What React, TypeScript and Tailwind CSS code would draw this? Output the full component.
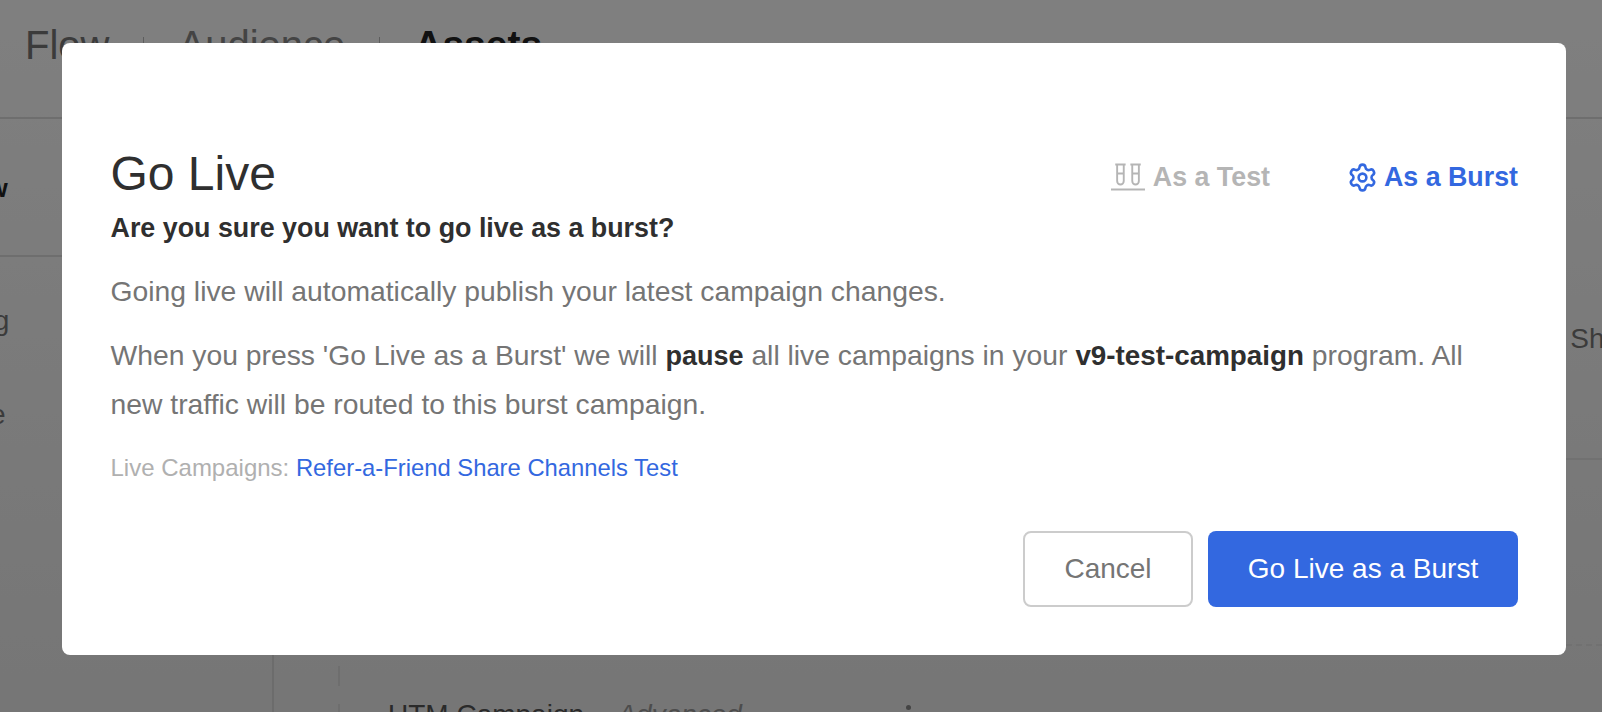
import { Settings } from "lucide-react";

function Tubes() {
  return (
    <svg width="34" height="28" viewBox="0 0 36 28" preserveAspectRatio="none" fill="none" stroke="#b5b5b5" strokeWidth="2">
      <path d="M4.5 1.5h11M6.5 1.5v16.5a3.5 3.5 0 0 0 7 0V1.5M6.5 10.5h7" />
      <path d="M20.5 1.5h11M22.5 1.5v16.5a3.5 3.5 0 0 0 7 0V1.5M22.5 10.5h7" />
      <path d="M0 26.5h36" />
    </svg>
  );
}

export default function App() {
  return (
    <div className="relative w-[1602px] h-[712px] overflow-hidden bg-gradient-to-b from-white to-[#ececec] font-['Liberation_Sans',Arial,sans-serif] text-[#333]">
      {/* page behind the dialog */}
      <div className="flex h-[119px] items-start gap-[34px] border-b-2 border-[#ddd] pl-[25px] pt-[22px] text-[40px] leading-[46px]">
        <span className="text-[#777]">Flow</span>
        <span className="mt-[15px] h-[12px] w-[1px] bg-[#bbb]" />
        <span className="text-[#888]">Audience</span>
        <span className="mt-[15px] h-[12px] w-[1px] bg-[#bbb]" />
        <span className="text-[39px] font-bold text-[#222]">Assets</span>
      </div>
      <div className="flex h-[593px]">
        <div className="w-[274px] shrink-0 overflow-hidden border-r-2 border-[#d8d8d8]">
          <div className="h-[138px] border-b-2 border-[#ddd] pt-[53px] text-[26px] font-bold leading-[32px] text-[#222]">
            <span className="-ml-[108px] block">Overview</span>
          </div>
          <div className="pt-[48px] text-[28px] leading-[32px] text-[#777]">
            <div className="-ml-[126px]">Messaging</div>
            <div className="-ml-[108px] mt-[62px]">Template</div>
          </div>
        </div>
        <div className="relative flex-1 overflow-hidden">
          <div className="h-[341px] border-b-2 border-[#e2e2e2]">
            <div className="flex justify-end pt-[204px] text-[28px] leading-[32px] text-[#777]">
              <span className="-mr-[43px]">Share</span>
            </div>
          </div>
          <div className="h-[186px] border-b-2 border-dashed border-[#e2e2e2]" />
          <div className="ml-[64px] mt-[20px] h-[20px] w-[2px] bg-[#ddd]" />
          <div className="ml-[64px] mt-[18px] h-[30px] w-[2px] bg-[#ddd]" />
          <div className="absolute bottom-[-19px] left-[114px] flex items-baseline text-[28px] leading-[32px] text-[#555]">
            <span>UTM Campaign</span>
            <span className="ml-[12px] text-[#999]">-</span>
            <span className="ml-[12px] italic text-[#999]">Advanced</span>
          </div>
          <div className="absolute left-[632px] top-[586px] h-[5px] w-[5px] rounded-full bg-[#888]" />
        </div>
      </div>

      {/* backdrop + dialog */}
      <div className="absolute inset-0 bg-black/50">
        <div className="absolute left-[61.5px] top-[43px] flex h-[612px] w-[1504.5px] flex-col rounded-[8px] bg-white pl-[49px] pr-[48px] pt-[103px]">
          <div className="flex items-start justify-between">
            <h1 className="text-[48px] font-normal leading-[56px] text-[#2f2f2f]">Go Live</h1>
            <div className="flex items-center pt-[14px] text-[26.8px] font-bold leading-[34px]">
              <div className="flex items-center gap-[8px] text-[#b5b5b5]">
                <Tubes />
                <span>As a Test</span>
              </div>
              <div className="ml-[77px] flex items-center gap-[6px] text-[#3368e0]">
                <Settings size={31} strokeWidth={2} />
                <span>As a Burst</span>
              </div>
            </div>
          </div>
          <p className="mt-[10px] text-[26.85px] font-bold leading-[32px] text-[#2f2f2f]">Are you sure you want to go live as a burst?</p>
          <p className="mt-[31px] text-[28.3px] leading-[32px] text-[#757575]">Going live will automatically publish your latest campaign changes.</p>
          <p className="mt-[24px] text-[28.3px] leading-[48px] text-[#757575]">
            When you press 'Go Live as a Burst' we will <b className="text-[27px] text-[#2f2f2f]">pause</b> all live campaigns in your <b className="text-[27.8px] text-[#2f2f2f]">v9-test-campaign</b> program. All new traffic will be routed to this burst campaign.
          </p>
          <p className="mt-[26px] text-[24px] leading-[28px] text-[#b0b0b0]">
            Live Campaigns: <span className="text-[23.8px] text-[#3368e0]">Refer-a-Friend Share Channels Test</span>
          </p>
          <div className="mt-[49px] flex justify-end gap-[15px]">
            <button className="h-[76px] w-[170px] rounded-[8px] border-2 border-[#cccccc] bg-white text-[28px] text-[#757575]">Cancel</button>
            <button className="h-[76px] w-[310px] rounded-[8px] bg-[#3368e0] text-[28px] text-white">Go Live as a Burst</button>
          </div>
        </div>
      </div>
    </div>
  );
}
